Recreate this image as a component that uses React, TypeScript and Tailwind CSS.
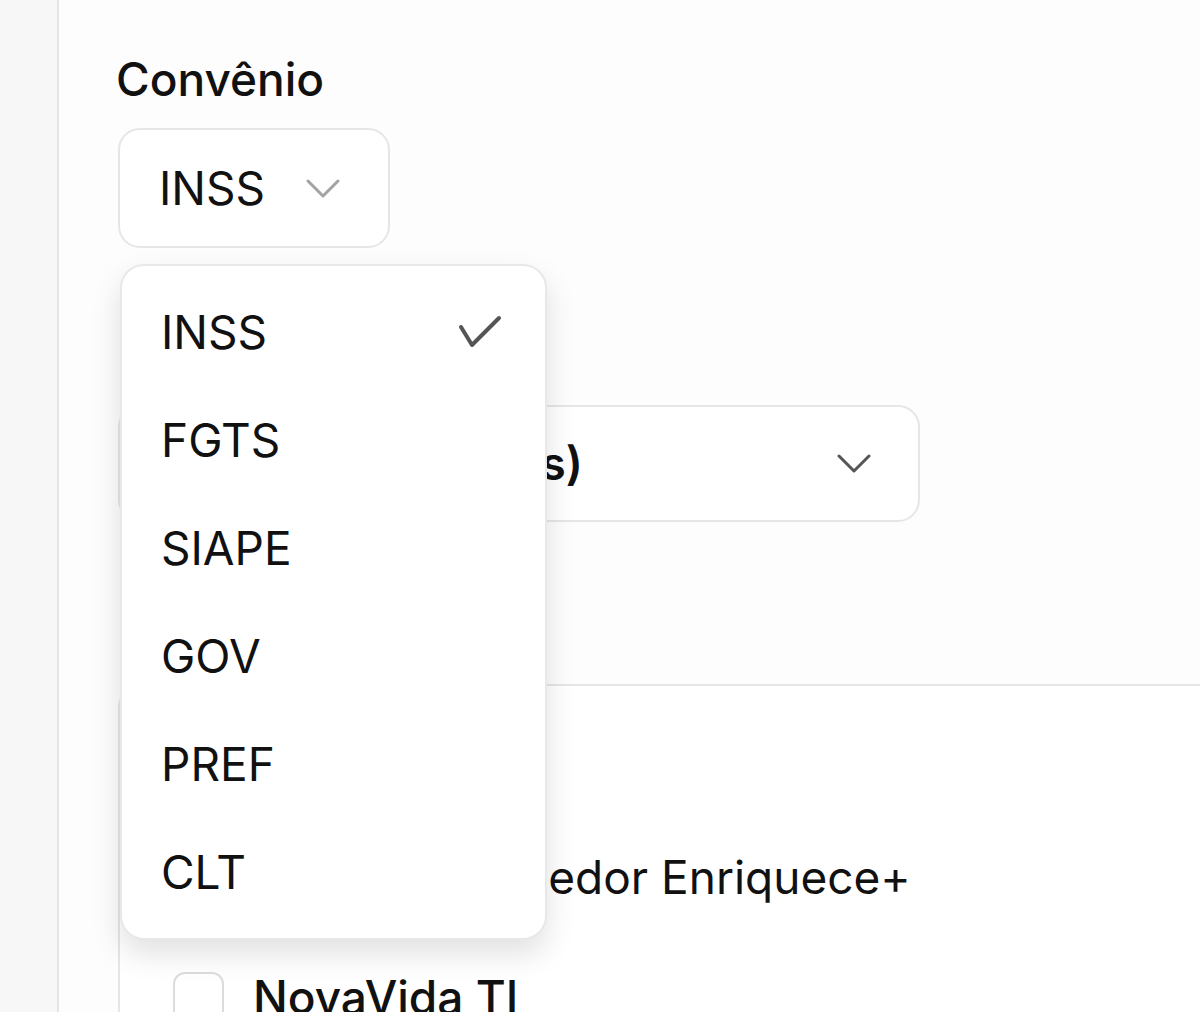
import React from "react";

const Chevron = ({ className }: { className?: string }) => (
  <svg width="34" height="20" viewBox="0 0 34 20" fill="none" className={className}>
    <polyline points="2,2 17,17 32,2" stroke="currentColor" strokeWidth="3" strokeLinecap="round" strokeLinejoin="round" />
  </svg>
);

const Check = () => (
  <svg width="44" height="34" viewBox="0 0 44 34" fill="none" className="text-[#555]">
    <polyline points="3,12 14,30 41,3" stroke="currentColor" strokeWidth="4" strokeLinecap="round" strokeLinejoin="round" />
  </svg>
);

const options = ["INSS", "FGTS", "SIAPE", "GOV", "PREF", "CLT"];

export default function App() {
  return (
    <div
      className="flex w-[1200px] h-[1012px] overflow-hidden bg-white text-[#111]"
      style={{ fontFamily: "Inter, 'Noto Sans', sans-serif" }}
    >
      <div className="w-[59px] shrink-0 bg-[#f7f7f7] border-r-2 border-[#e4e4e4]" />
      <div className="relative flex-1 pl-[59px] pt-[52px] bg-[#fdfdfd]">
        <div className="-ml-[2px] text-[46px] leading-[55px] font-medium">Convênio</div>
        <div className="mt-[21px] flex items-center h-[120px] w-[272px] rounded-[22px] border-2 border-[#e6e6e6] bg-white pl-[39px]">
          <span className="text-[46px] leading-[55px]">INSS</span>
          <Chevron className="ml-[41px] mt-[2px] text-[#a3a3a3]" />
        </div>

        <div className="mt-[60px] h-[55px]" />
        <div className="mt-[42px] flex items-center justify-between h-[117px] w-[802px] rounded-[22px] border-2 border-[#e6e6e6] bg-white pl-[39px] pr-[47px]">
          <span className="text-[46px] leading-[55px] font-semibold">Todos (escolhidos)</span>
          <Chevron className="text-[#555]" />
        </div>

        <div className="mt-[162px] w-[1200px] h-[600px] rounded-[24px] border-2 border-[#e6e6e6] bg-white pl-[53px] pt-[50px]">
          <div className="h-[55px]" />
          <div className="mt-[59px] ml-[13px] text-[46px] leading-[55px]">Dados do fornecedor Enriquece+</div>
          <div className="mt-[65px] flex items-center gap-[29px]">
            <div className="w-[51px] h-[51px] rounded-[12px] border-2 border-[#dcdcdc] bg-white" />
            <span className="text-[46px] leading-[55px] font-medium">NovaVida TI</span>
          </div>
        </div>

        <div className="absolute left-[61px] top-[264px] w-[427px] rounded-[24px] border-2 border-[#e8e8e8] bg-white py-[12px] shadow-[0_14px_30px_rgba(0,0,0,0.12)]">
          {options.map((o, i) => (
            <div key={o} className="flex items-center justify-between h-[108px] pl-[39px] pr-[43px]">
              <span className="text-[46px] leading-[55px]">{o}</span>
              {i === 0 && <Check />}
            </div>
          ))}
        </div>
      </div>
    </div>
  );
}
